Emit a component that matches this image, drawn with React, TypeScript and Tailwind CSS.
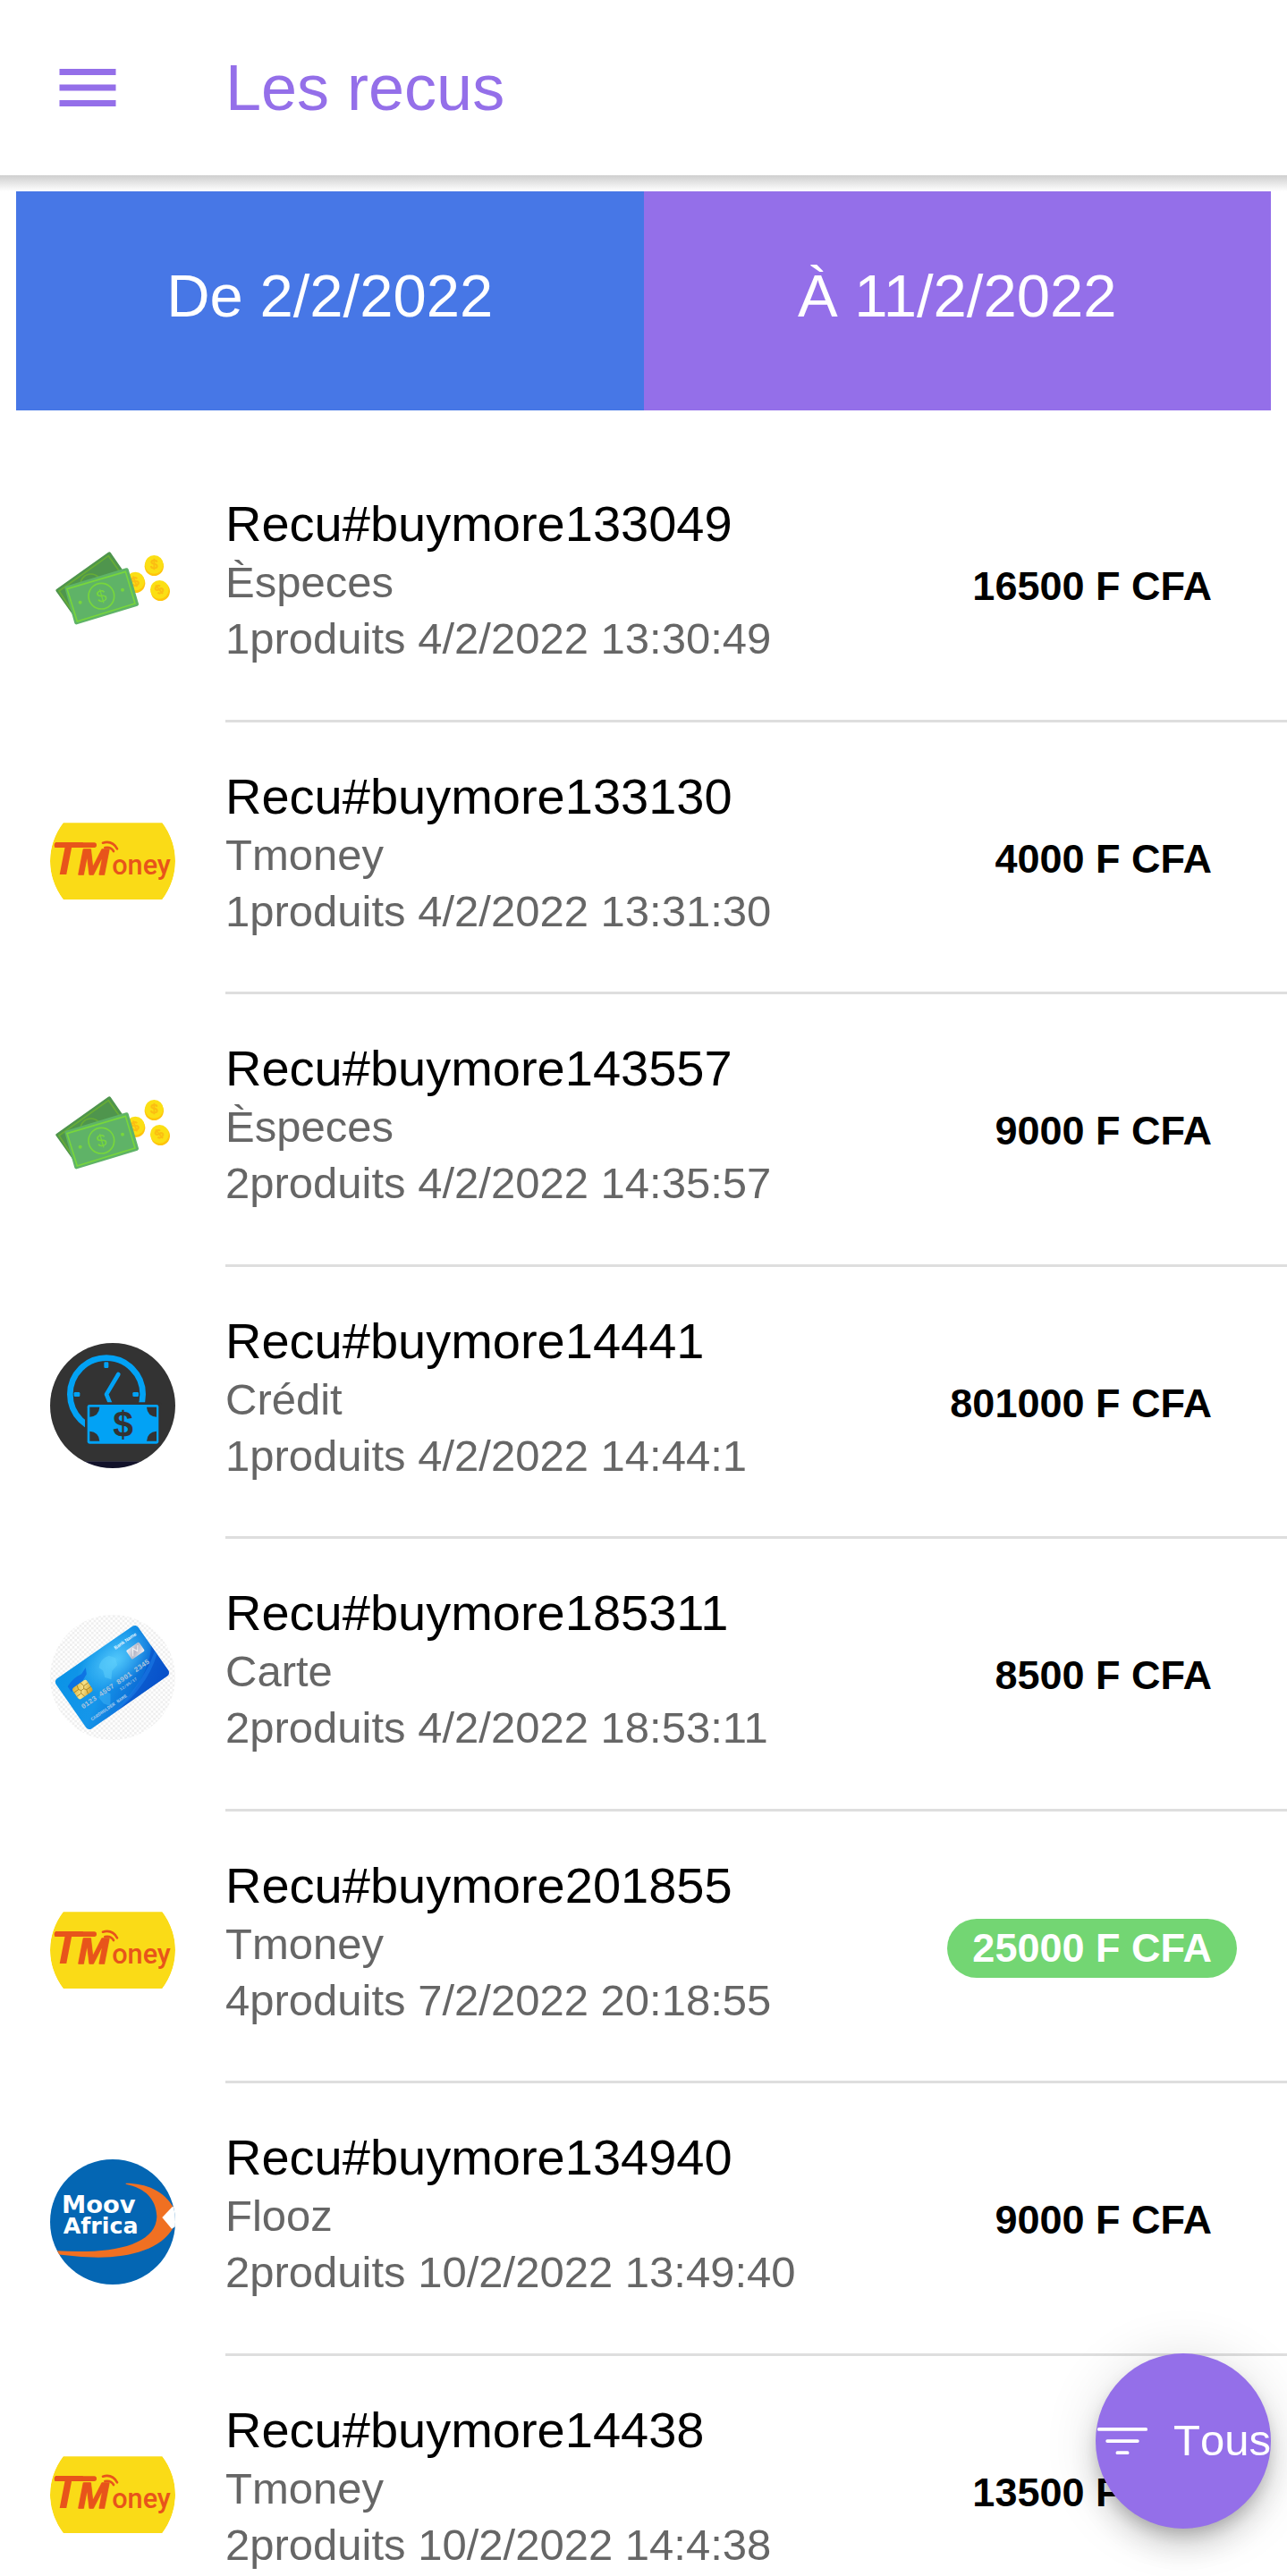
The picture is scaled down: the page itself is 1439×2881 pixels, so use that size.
import React from "react";

function CashIcon() {
  return (
    <svg viewBox="78 24 420 420" className="size-full" aria-hidden="true">
      <g fill="#ffc40c">
        <circle cx="427" cy="160" r="32" />
        <circle cx="365" cy="217" r="32" />
        <circle cx="448" cy="244" r="32" />
      </g>
      <g fill="#fbdf14">
        <circle cx="427" cy="154" r="31" />
        <circle cx="364" cy="210" r="31" />
        <circle cx="445" cy="238" r="31" />
      </g>
      <g
        fill="#fbbd12"
        stroke="#fbbd12"
        strokeWidth="2"
        fontFamily="Liberation Sans, sans-serif"
        fontSize="44"
        textAnchor="middle"
      >
        <text x="427" y="169">$</text>
        <text x="362" y="226" transform="rotate(-20 362 210)">$</text>
        <text x="444" y="253" transform="rotate(-40 444 238)">$</text>
      </g>
      <path d="M99 237 273 113q5-3 8 1l70 101-190 117-4-5-59-83q-3-4 1-7z" fill="#4f954d" />
      <path d="M150 307 108 243 274 125l62 88" fill="none" stroke="#67ad35" strokeWidth="5" />
      <circle cx="215" cy="221" r="35" fill="none" stroke="#67ad35" strokeWidth="5" />
      <path
        d="M130 227 333 166q6-1 8 4l34 116q1 5-4 7l-203 62q-6 1-8-4L127 233q0-4 3-6z"
        fill="#5fb367"
      />
      <path d="M135 236 331 178l32 107-194 60z" fill="none" stroke="#77d63c" strokeWidth="5" />
      <circle cx="250" cy="260" r="43" fill="none" stroke="#77d63c" strokeWidth="5" />
      <circle cx="179" cy="281" r="6" fill="#77d63c" />
      <circle cx="321" cy="239" r="6" fill="#77d63c" />
      <text
        x="250"
        y="280"
        fill="#77d63c"
        fontFamily="Liberation Sans, sans-serif"
        fontSize="58"
        textAnchor="middle"
        transform="rotate(-16 250 260)"
      >
        $
      </text>
    </svg>
  );
}

function TmoneyIcon() {
  return (
    <svg viewBox="78 7 420 420" className="size-full" role="img" aria-label="TMoney">
      <path d="M122 89H455Q498 148 498 217T455 346H122Q78 286 78 217T122 89z" fill="#fadb17" />
      <rect x="92" y="155" width="142" height="17" rx="8" fill="#e8541b" />
      <text
        x="82"
        y="263"
        fill="#e8541b"
        fontFamily="Liberation Sans, sans-serif"
        fontSize="157"
        fontWeight="700"
        fontStyle="italic"
      >
        T
        <tspan dx="-6" fontSize="122" stroke="#e8541b" strokeWidth="4" strokeLinejoin="round">
          M
        </tspan>
        <tspan dx="12" fontFamily="Roboto, sans-serif" fontSize="92" fontWeight="500" fontStyle="normal">
          oney
        </tspan>
      </text>
      <g fill="none" stroke="#e8541b" strokeWidth="8" strokeLinecap="round">
        <path d="M255 156q32-9 48 20" />
        <path d="M262 172q20-4 29 12" />
      </g>
    </svg>
  );
}

function CreditIcon() {
  return (
    <svg viewBox="78 64 420 420" className="size-full" aria-hidden="true">
      <rect x="78" y="64" width="420" height="398" fill="#333333" />
      <rect x="78" y="461" width="420" height="24" fill="#12122a" />
      <circle cx="267" cy="236" r="122" fill="none" stroke="#02a2f5" strokeWidth="20" />
      <g fill="#02a2f5">
        <rect x="259" y="128" width="15" height="20" rx="4" />
        <rect x="158" y="229" width="20" height="15" rx="4" />
        <rect x="355" y="229" width="20" height="15" rx="4" />
      </g>
      <path
        d="M307 169 267 236l14 34"
        fill="none"
        stroke="#02a2f5"
        strokeWidth="14"
        strokeLinecap="round"
        strokeLinejoin="round"
      />
      <rect x="195" y="263" width="256" height="146" rx="6" fill="#333333" />
      <rect x="203" y="271" width="239" height="131" rx="7" fill="#02a2f5" />
      <g fill="#333333">
        <path d="M211 279h33q-2 30-33 33z" />
        <path d="M435 279h-33q2 30 33 33z" />
        <path d="M211 393h33q-2-30-33-33z" />
        <path d="M435 393h-33q2-30 33-33z" />
        <text
          x="323"
          y="379"
          fontFamily="Liberation Sans, sans-serif"
          fontSize="122"
          fontWeight="700"
          textAnchor="middle"
        >
          $
        </text>
      </g>
    </svg>
  );
}

function CardIcon() {
  return (
    <svg viewBox="78 47 420 420" className="size-full" aria-hidden="true">
      <defs>
        <pattern id="card-checks" width="16" height="16" patternUnits="userSpaceOnUse">
          <rect width="16" height="16" fill="#ffffff" />
          <rect width="8" height="8" fill="#efefef" />
          <rect x="8" y="8" width="8" height="8" fill="#efefef" />
        </pattern>
        <linearGradient id="card-base" x1="0" y1="0" x2="1" y2="1">
          <stop offset="0" stopColor="#0a93e6" />
          <stop offset="0.45" stopColor="#1596ea" />
          <stop offset="1" stopColor="#0550c8" />
        </linearGradient>
        <radialGradient id="card-glow" cx="0.62" cy="0.3" r="0.42">
          <stop offset="0" stopColor="#53c8fb" />
          <stop offset="1" stopColor="#53c8fb" stopOpacity="0" />
        </radialGradient>
        <linearGradient id="card-chip" x1="0" y1="0" x2="1" y2="1">
          <stop offset="0" stopColor="#d9a92c" />
          <stop offset="0.5" stopColor="#f7e28a" />
          <stop offset="1" stopColor="#c9961c" />
        </linearGradient>
        <linearGradient id="card-holo" x1="0" y1="0" x2="1" y2="1">
          <stop offset="0" stopColor="#f4f4f8" />
          <stop offset="0.5" stopColor="#b5b8c8" />
          <stop offset="1" stopColor="#f0f0f4" />
        </linearGradient>
      </defs>
      <rect x="78" y="47" width="420" height="420" fill="url(#card-checks)" />
      <g transform="translate(90 269) rotate(-34.8)">
        <rect width="336" height="204" rx="14" fill="url(#card-base)" />
        <path d="M120 204C200 190 290 150 336 90v100q0 14-14 14z" fill="#0a4fc9" opacity="0.6" />
        <path d="M60 204C170 196 270 160 336 110v14C270 176 190 200 110 204z" fill="#1a7be6" opacity="0.6" />
        <rect width="336" height="204" rx="14" fill="url(#card-glow)" />
        <path
          d="M28 42q30-14 62-8l24-10-10 20-22 10-14 16-16-10-24 4z"
          fill="#0a63e0"
          opacity="0.7"
        />
        <path
          d="M150 50q20-22 50-14l14 18-8 24-26 6-18 22-14-18 8-22z"
          fill="#5fcffc"
          opacity="0.5"
        />
        <path d="M92 130l30-4 10 18-24 34-14-20z" fill="#3fb4f5" opacity="0.5" />
        <rect x="34" y="56" width="58" height="46" rx="9" fill="url(#card-chip)" />
        <path
          d="M34 71h18l6 8-6 8H34M92 71H74l-6 8 6 8h18M52 71l4-15M52 87l4 15M74 71l-4-15M74 87l-4 15M58 79h10"
          fill="none"
          stroke="#9a7212"
          strokeWidth="2"
        />
        <rect x="257" y="55" width="52" height="36" rx="4" fill="url(#card-holo)" />
        <path d="M266 84l14-22 8 16 12-16" fill="none" stroke="#ffffff" strokeWidth="3" opacity="0.8" />
        <text x="230" y="32" fill="#e8f6ff" fontFamily="Liberation Sans, sans-serif" fontSize="16" fontWeight="700">
          Bank Name
        </text>
        <text x="27" y="134" fill="#a9c3dc" fontFamily="Liberation Mono, monospace" fontSize="24" fontWeight="700">
          0123 4567 8901 2345
        </text>
        <text x="166" y="156" fill="#9fc0e4" fontFamily="Liberation Mono, monospace" fontSize="14" fontWeight="700">
          12/05/17
        </text>
        <text x="29" y="184" fill="#a3c8ec" fontFamily="Liberation Mono, monospace" fontSize="16" fontWeight="700">
          CARDHOLDER NAME
        </text>
      </g>
    </svg>
  );
}

function FloozIcon() {
  return (
    <svg viewBox="78 44 420 420" className="size-full" role="img" aria-label="Moov Africa">
      <rect x="78" y="44" width="420" height="420" fill="#0466b3" />
      <path
        d="M332 124C400 124 462 150 492 206V272C452 344 350 373 240 373Q170 372 100 363V351Q150 354 200 353C340 350 434 312 436 236C434 176 396 140 332 127z"
        fill="#f07022"
      />
      <path d="M454 239 489 202 510 222V262L486 277z" fill="#ffffff" />
      <text fill="#ffffff" fontFamily="DejaVu Sans, sans-serif" fontWeight="700">
        <tspan x="117" y="223" fontSize="82">
          Moov
        </tspan>
        <tspan x="122" y="293" fontSize="76">
          Africa
        </tspan>
      </text>
    </svg>
  );
}

type Method = "Èspeces" | "Tmoney" | "Crédit" | "Carte" | "Flooz";

const icons: Record<Method, () => React.ReactElement> = {
  Èspeces: CashIcon,
  Tmoney: TmoneyIcon,
  Crédit: CreditIcon,
  Carte: CardIcon,
  Flooz: FloozIcon,
};

interface Receipt {
  id: string;
  method: Method;
  details: string;
  amount: string;
  highlighted?: boolean;
}

const receipts: Receipt[] = [
  { id: "133049", method: "Èspeces", details: "1produits 4/2/2022 13:30:49", amount: "16500 F CFA" },
  { id: "133130", method: "Tmoney", details: "1produits 4/2/2022 13:31:30", amount: "4000 F CFA" },
  { id: "143557", method: "Èspeces", details: "2produits 4/2/2022 14:35:57", amount: "9000 F CFA" },
  { id: "14441", method: "Crédit", details: "1produits 4/2/2022 14:44:1", amount: "801000 F CFA" },
  { id: "185311", method: "Carte", details: "2produits 4/2/2022 18:53:11", amount: "8500 F CFA" },
  { id: "201855", method: "Tmoney", details: "4produits 7/2/2022 20:18:55", amount: "25000 F CFA", highlighted: true },
  { id: "134940", method: "Flooz", details: "2produits 10/2/2022 13:49:40", amount: "9000 F CFA" },
  { id: "14438", method: "Tmoney", details: "2produits 10/2/2022 14:4:38", amount: "13500 F CFA" },
];

function ReceiptRow({ receipt }: { receipt: Receipt }) {
  const Icon = icons[receipt.method];
  return (
    <li className="flex h-[305px] items-start pl-14 even:h-[304px]">
      <div className="mt-[85px] mr-14 size-[140px] shrink-0 overflow-hidden rounded-full">
        <Icon />
      </div>
      <div className="flex h-full min-w-0 flex-1 items-start justify-between border-b-[3px] border-[#dedede] pr-14">
        <div className="pt-[49px]">
          <h2 className="text-[56px] leading-[68px] text-black">Recu#buymore{receipt.id}</h2>
          <p className="text-[49px] leading-[63px] text-[#666666]">{receipt.method}</p>
          <p className="text-[49px] leading-[63px] text-[#666666]">{receipt.details}</p>
        </div>
        <span
          className={
            receipt.highlighted
              ? "mt-[120px] rounded-full bg-[#73d673] px-7 text-[45px] leading-[66px] font-bold whitespace-nowrap text-white"
              : "mt-[120px] px-7 text-[45px] leading-[66px] font-bold whitespace-nowrap text-black"
          }
        >
          {receipt.amount}
        </span>
      </div>
    </li>
  );
}

export default function App() {
  return (
    <div className="flex h-screen flex-col overflow-hidden bg-white font-['Liberation_Sans',Arial,sans-serif]">
      <header className="flex h-[196px] shrink-0 items-center gap-28 px-14 text-[#946fe9]">
        <button type="button" aria-label="Menu" className="size-[84px]">
          <svg viewBox="0 0 24 24" fill="currentColor" className="size-full" aria-hidden="true">
            <path d="M3 18h18v-2H3v2zm0-5h18v-2H3v2zm0-7v2h18V6H3z" />
          </svg>
        </button>
        <h1 className="text-[72px] leading-[84px]">Les recus</h1>
      </header>

      <main className="min-h-0 flex-1 overflow-y-auto [scrollbar-width:none]">
        <div className="h-[18px] bg-linear-to-b from-[#cfcfcf] to-white" />
        <div className="mx-[18px] grid h-[245px] grid-cols-2 text-[67px] text-white">
          <button type="button" className="bg-[#4777e6] pb-2.5">
            De 2/2/2022
          </button>
          <button type="button" className="bg-[#946fe9] pb-2.5">
            À 11/2/2022
          </button>
        </div>
        <ul className="mt-11">
          {receipts.map((receipt) => (
            <ReceiptRow key={receipt.id} receipt={receipt} />
          ))}
        </ul>
      </main>

      <button
        type="button"
        className="fixed right-[18px] bottom-[53px] flex size-[196px] items-center gap-[27px] overflow-hidden rounded-full bg-[#946fe9] text-[49px] text-white shadow-[0_10px_18px_-4px_rgba(0,0,0,0.2),0_21px_35px_0_rgba(0,0,0,0.14),0_4px_63px_0_rgba(0,0,0,0.12)] [font-kerning:none]"
      >
        <svg
          viewBox="0 0 512 512"
          className="size-[60px] shrink-0"
          fill="none"
          stroke="currentColor"
          strokeWidth="32"
          strokeLinecap="round"
          aria-hidden="true"
        >
          <path d="M32 144h448M112 256h288M208 368h96" />
        </svg>
        Tous
      </button>
    </div>
  );
}
